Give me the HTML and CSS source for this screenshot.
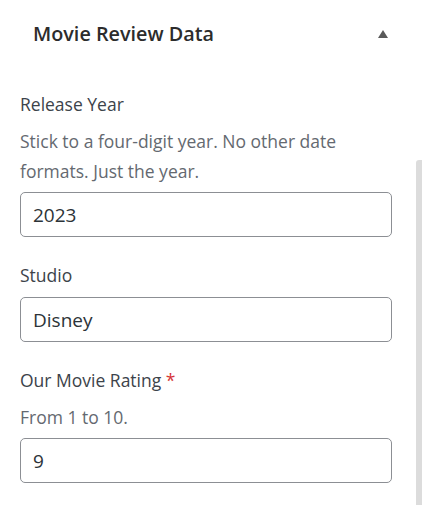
FILE: index.html
```html
<!DOCTYPE html>
<html lang="en">
<head>
<meta charset="utf-8">
<title>Movie Review Data</title>
<link rel="stylesheet" href="styles.css">
</head>
<body>
<div class="panel">
  <div class="panel-header">
    <h2 class="panel-title">Movie Review Data</h2>
    <span class="toggle" aria-hidden="true"></span>
  </div>
  <div class="panel-body">
    <div class="field">
      <label class="label" for="year">Release Year</label>
      <p class="desc">Stick to a four-digit year. No other date formats. Just the year.</p>
      <input class="input" id="year" type="text" value="2023">
    </div>
    <div class="field">
      <label class="label" for="studio">Studio</label>
      <input class="input" id="studio" type="text" value="Disney">
    </div>
    <div class="field">
      <label class="label" for="rating">Our Movie Rating <span class="req">*</span></label>
      <p class="desc">From 1 to 10.</p>
      <input class="input" id="rating" type="text" value="9">
    </div>
  </div>
  <div class="scrollbar"></div>
</div>
</body>
</html>
```
FILE: styles.css
```css
html, body {
  margin: 0;
  padding: 0;
  background: #ffffff;
}
body {
  font-family: "Open Sans", "Noto Sans", sans-serif;
  color: #3c434a;
  width: 422px;
  height: 505px;
  overflow: hidden;
}
.panel {
  position: relative;
  height: 505px;
}
.panel-header {
  display: flex;
  align-items: center;
  justify-content: space-between;
  padding: 18px 33px 0 33px;
  height: 32px;
}
.panel-title {
  margin: 0;
  font-size: 19.8px;
  font-weight: 600;
  color: #2c2c2c;
  line-height: 32px;
}
.toggle {
  width: 0;
  height: 0;
  border-left: 5.5px solid transparent;
  border-right: 5.5px solid transparent;
  border-bottom: 8px solid #5a5a5a;
  margin-right: 1px;
}
.panel-body {
  padding: 39px 30px 0 20px;
  display: flex;
  flex-direction: column;
  gap: 23px;
}
.field {
  display: flex;
  flex-direction: column;
}
.label {
  font-size: 17.5px;
  line-height: 30px;
  color: #3c434a;
  margin-bottom: 7px;
}
.req {
  color: #d63638;
}
.desc {
  margin: 0 0 6px 0;
  font-size: 17.5px;
  line-height: 30px;
  color: #646970;
}
.input {
  box-sizing: border-box;
  width: 372px;
  height: 45px;
  border: 1px solid #8c8f94;
  border-radius: 5px;
  padding: 0 12px;
  font-family: "Open Sans", "Noto Sans", sans-serif;
  font-size: 19px;
  color: #2c3338;
  background: #fff;
  margin: 0;
}
.scrollbar {
  position: absolute;
  right: 0;
  top: 160px;
  bottom: 0;
  width: 6px;
  background: #dcdcdc;
  border-radius: 3px 0 0 0;
}
```
